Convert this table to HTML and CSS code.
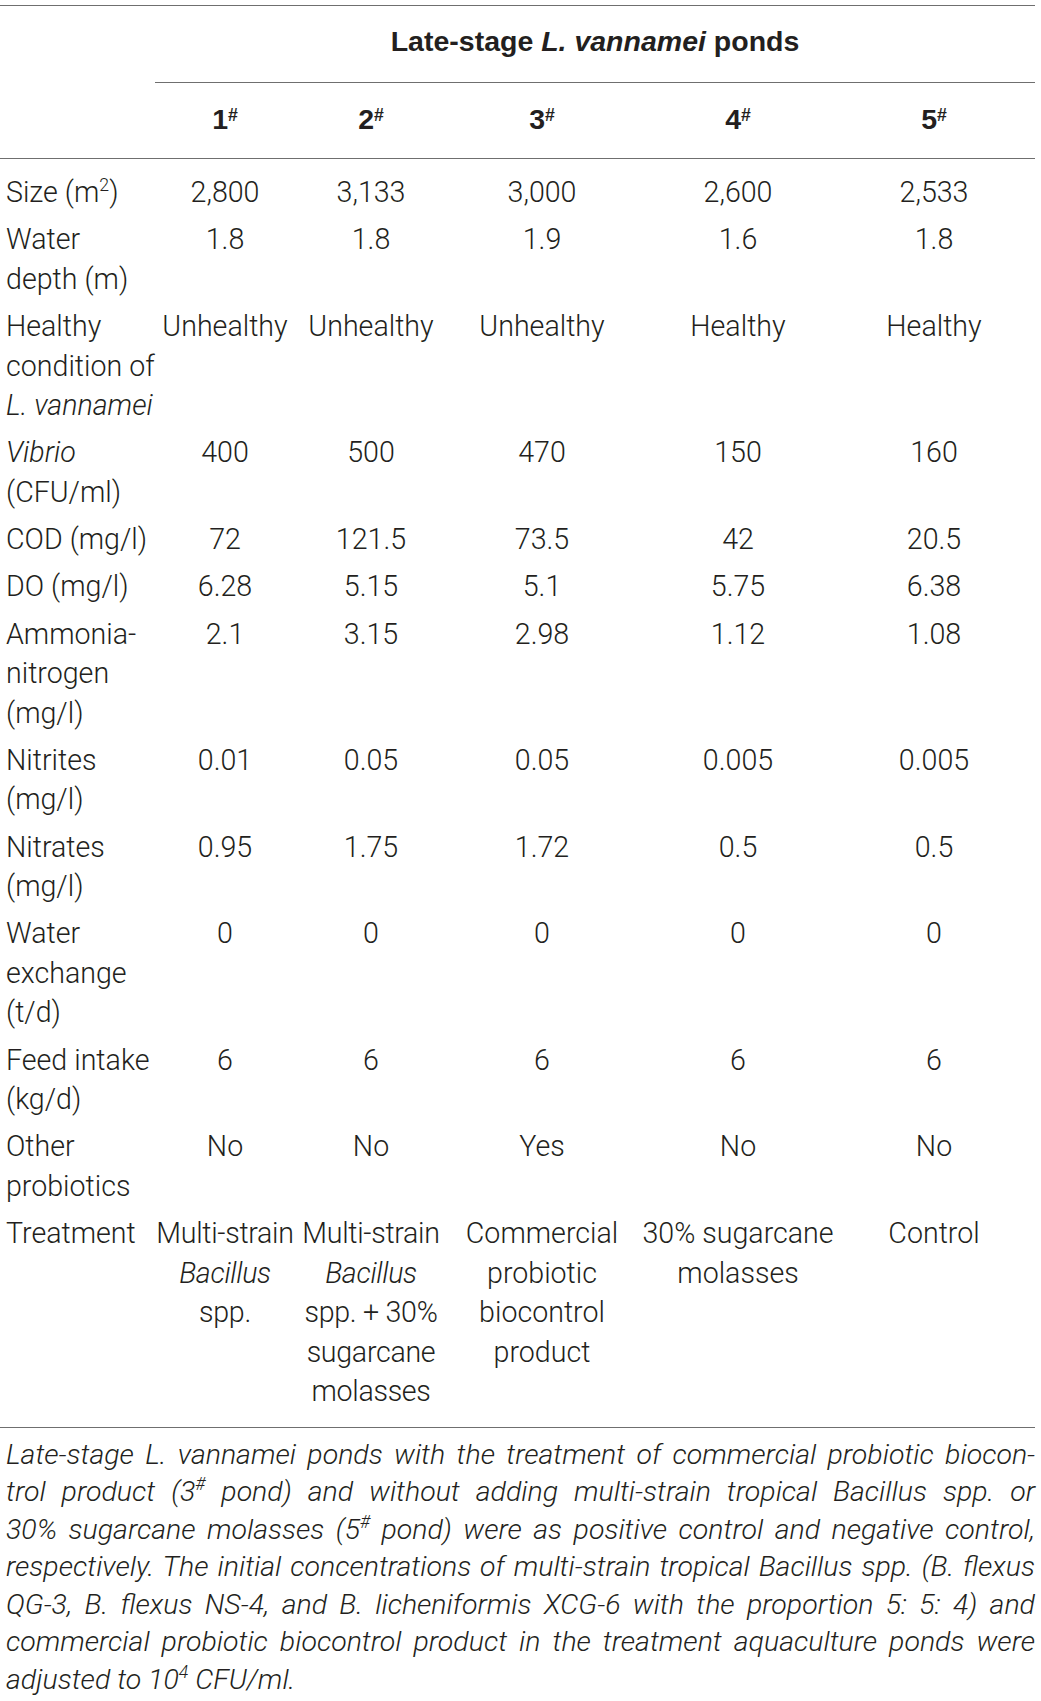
FILE: index.html
```html
<!DOCTYPE html>
<html lang="en">
<head>
<meta charset="utf-8">
<title>Late-stage L. vannamei ponds</title>
<link rel="stylesheet" href="styles.css">
</head>
<body>
<div class="page">
  <table class="data">
    <colgroup>
      <col class="c-label"><col class="c-1"><col class="c-2"><col class="c-3"><col class="c-4"><col class="c-5">
    </colgroup>
    <thead>
      <tr class="group-row">
        <th class="blank"></th>
        <th colspan="5" class="group-title">Late-stage <i>L. vannamei</i> ponds</th>
      </tr>
      <tr class="pond-row">
        <th class="blank"></th>
        <th>1<sup>#</sup></th>
        <th>2<sup>#</sup></th>
        <th>3<sup>#</sup></th>
        <th>4<sup>#</sup></th>
        <th class="last">5<sup>#</sup></th>
      </tr>
    </thead>
    <tbody>
      <tr class="first">
        <td class="label">Size (m<sup>2</sup>)</td>
        <td>2,800</td><td>3,133</td><td>3,000</td><td>2,600</td><td class="last">2,533</td>
      </tr>
      <tr>
        <td class="label">Water depth (m)</td>
        <td>1.8</td><td>1.8</td><td>1.9</td><td>1.6</td><td class="last">1.8</td>
      </tr>
      <tr>
        <td class="label">Healthy <span class="nowrap">condition of</span> <i class="nowrap">L. vannamei</i></td>
        <td>Unhealthy</td><td>Unhealthy</td><td>Unhealthy</td><td>Healthy</td><td class="last">Healthy</td>
      </tr>
      <tr>
        <td class="label"><i>Vibrio</i> (CFU/ml)</td>
        <td>400</td><td>500</td><td>470</td><td>150</td><td class="last">160</td>
      </tr>
      <tr>
        <td class="label">COD (mg/l)</td>
        <td>72</td><td>121.5</td><td>73.5</td><td>42</td><td class="last">20.5</td>
      </tr>
      <tr>
        <td class="label">DO (mg/l)</td>
        <td>6.28</td><td>5.15</td><td>5.1</td><td>5.75</td><td class="last">6.38</td>
      </tr>
      <tr>
        <td class="label">Ammonia-nitrogen (mg/l)</td>
        <td>2.1</td><td>3.15</td><td>2.98</td><td>1.12</td><td class="last">1.08</td>
      </tr>
      <tr>
        <td class="label">Nitrites (mg/l)</td>
        <td>0.01</td><td>0.05</td><td>0.05</td><td>0.005</td><td class="last">0.005</td>
      </tr>
      <tr>
        <td class="label">Nitrates (mg/l)</td>
        <td>0.95</td><td>1.75</td><td>1.72</td><td>0.5</td><td class="last">0.5</td>
      </tr>
      <tr>
        <td class="label">Water exchange (t/d)</td>
        <td>0</td><td>0</td><td>0</td><td>0</td><td class="last">0</td>
      </tr>
      <tr>
        <td class="label"><span class="nowrap">Feed intake</span> (kg/d)</td>
        <td>6</td><td>6</td><td>6</td><td>6</td><td class="last">6</td>
      </tr>
      <tr>
        <td class="label">Other probiotics</td>
        <td>No</td><td>No</td><td>Yes</td><td>No</td><td class="last">No</td>
      </tr>
      <tr class="final">
        <td class="label">Treatment</td>
        <td class="tight"><span class="nowrap">Multi-strain</span> <i>Bacillus</i> spp.</td>
        <td class="tight"><span class="nowrap">Multi-strain</span> <i>Bacillus</i> spp.&nbsp;+&nbsp;30% sugarcane molasses</td>
        <td>Commercial probiotic biocontrol product</td>
        <td><span class="nowrap">30% sugarcane</span> molasses</td>
        <td class="last">Control</td>
      </tr>
    </tbody>
  </table>
  <p class="caption">
    <span class="line">Late-stage L. vannamei ponds with the treatment of commercial probiotic biocon-</span>
    <span class="line">trol product (3<sup>#</sup> pond) and without adding multi-strain tropical Bacillus spp. or</span>
    <span class="line">30% sugarcane molasses (5<sup>#</sup> pond) were as positive control and negative control,</span>
    <span class="line tight">respectively. The initial concentrations of multi-strain tropical Bacillus spp. (B. flexus</span>
    <span class="line">QG-3, B. flexus NS-4, and B. licheniformis XCG-6 with the proportion 5: 5: 4) and</span>
    <span class="line">commercial probiotic biocontrol product in the treatment aquaculture ponds were</span>
    <span class="line end">adjusted to 10<sup>4</sup> CFU/ml.</span>
  </p>
</div>
</body>
</html>
```

FILE: styles.css
```css
html, body {
  margin: 0;
  padding: 0;
  background: #ffffff;
}

.page {
  width: 1035px;
  padding-top: 5px;
  font-family: Roboto, "Liberation Sans", Arial, sans-serif;
  font-weight: 300;
  color: #231f20;
}

.data {
  width: 1035px;
  border-collapse: separate;
  border-spacing: 0;
  table-layout: fixed;
  font-size: 28.6px;
  line-height: 39.5px;
}

.c-label { width: 155px; }
.c-1 { width: 140px; }
.c-2 { width: 152px; }
.c-3 { width: 190px; }
.c-4 { width: 202px; }
.c-5 { width: 196px; }

.data th,
.data td {
  padding: 0;
  text-align: center;
  vertical-align: top;
}

.data th {
  font-family: "Liberation Sans", Arial, sans-serif;
  font-weight: bold;
  font-size: 28.5px;
  line-height: 40px;
  color: #231f20;
}

.group-row th {
  border-top: 1px solid #6f6f6f;
  padding-top: 15px;
  padding-bottom: 21px;
}

.group-row .group-title {
  border-bottom: 1px solid #6f6f6f;
}

.pond-row th {
  border-bottom: 1px solid #6f6f6f;
  padding-top: 16px;
  padding-bottom: 19px;
}

.data sup {
  font-size: 0.62em;
  line-height: 0;
  vertical-align: 0.62em;
}

.data th sup {
  font-size: 0.62em;
  vertical-align: 0.45em;
}

.nowrap {
  white-space: nowrap;
}

.data td {
  padding-top: 4px;
  padding-bottom: 3.75px;
}

.data td.tight {
  letter-spacing: -0.3px;
}

.data td.label {
  text-align: left;
  padding-left: 6px;
}

.data .last {
  padding-right: 6px;
}

.data tr.first td {
  padding-top: 14px;
}

.data tr.final td {
  padding-bottom: 15px;
  border-bottom: 1px solid #6f6f6f;
}

.caption {
  margin: 0;
  padding: 8px 0 0 6px;
  width: 1029px;
  font-size: 28.5px;
  line-height: 37.5px;
  font-style: italic;
}

.caption .line {
  display: block;
  white-space: nowrap;
  text-align: justify;
  text-align-last: justify;
}

.caption .line.tight {
  word-spacing: -2px;
}

.caption .line.end {
  text-align: left;
  text-align-last: left;
}

.caption sup {
  font-size: 0.62em;
  line-height: 0;
  vertical-align: 0.62em;
}
```
